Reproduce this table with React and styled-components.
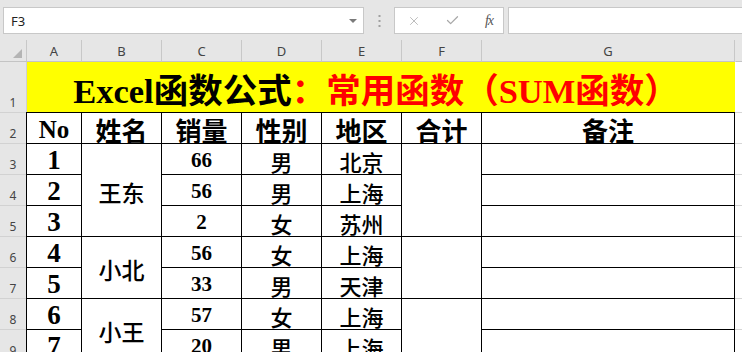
import styled, { createGlobalStyle } from 'styled-components';
import { X, Check } from 'lucide-react';

const GlobalStyle = createGlobalStyle`
  html, body {
    margin: 0;
    padding: 0;
    background: #ffffff;
    overflow: hidden;
  }
  body {
    width: 742px;
    height: 352px;
    font-family: "Noto Sans", "Open Sans", sans-serif;
  }
`;

const rows = [
  { no: 1, name: '王东', span: 3, qty: 66, sex: '男', area: '北京' },
  { no: 2, qty: 56, sex: '男', area: '上海' },
  { no: 3, qty: 2, sex: '女', area: '苏州' },
  { no: 4, name: '小北', span: 2, qty: 56, sex: '女', area: '上海' },
  { no: 5, qty: 33, sex: '男', area: '天津' },
  { no: 6, name: '小王', span: 2, qty: 57, sex: '女', area: '上海' },
  { no: 7, qty: 20, sex: '男', area: '上海' },
];

const letters = ['A', 'B', 'C', 'D', 'E', 'F', 'G'];

// 엑셀 상단 수식 입력줄
const FormulaBar = styled.div`
  height: 40px;
  box-sizing: border-box;
  background: #e6e6e6;
  display: flex;
  align-items: flex-start;
  padding: 7px 0 0 3px;
`;

const Box = styled.div`
  height: 27px;
  box-sizing: border-box;
  background: #ffffff;
  border: 1px solid #c8c8c8;
  display: flex;
  align-items: center;
`;

const NameBox = styled(Box)`
  width: 361px;
  padding: 0 6px 0 7px;
  justify-content: space-between;
  font-size: 13px;
  color: #222;
`;

const Caret = styled.span`
  width: 0;
  height: 0;
  border-left: 4px solid transparent;
  border-right: 4px solid transparent;
  border-top: 4px solid #7a7a7a;
`;

const Grip = styled.div`
  width: 30px;
  height: 27px;
  display: flex;
  align-items: center;
  justify-content: center;
`;

const ButtonBox = styled(Box)`
  width: 110px;
  padding: 0 10px 0 12px;
  justify-content: space-between;
  color: #a8a8a8;
`;

const Fx = styled.span`
  font-family: "Liberation Serif", serif;
  font-style: italic;
  font-size: 14px;
  color: #555;
  letter-spacing: -1px;
`;

const FormulaInput = styled(Box)`
  margin-left: 4px;
  flex: 1;
  border-right: none;
`;

// 시트 격자
const Sheet = styled.div`
  display: grid;
  grid-template-columns: 26px 55px 80px 80px 80px 80px 80px 254px 1fr;
  grid-template-rows: 22px 50px repeat(8, 31px);
`;

const Corner = styled.div`
  background: #e6e6e6;
  border-bottom: 1px solid #c4c4c4;
  display: flex;
  align-items: flex-end;
  justify-content: flex-end;
  padding: 0 4px 3px 0;
`;

const ColHead = styled.div`
  box-sizing: border-box;
  background: #e6e6e6;
  border-bottom: 1px solid #c4c4c4;
  border-left: 1px solid ${({ $edge }) => ($edge ? '#e6e6e6' : '#c8c8c8')};
  border-right: ${({ $last }) => ($last ? '1px solid #c8c8c8' : 'none')};
  display: flex;
  align-items: flex-end;
  justify-content: center;
  padding-bottom: 1px;
  font-size: 13px;
  color: #444;
`;

const RowHead = styled.div`
  box-sizing: border-box;
  background: #e6e6e6;
  border-top: ${({ $first }) => ($first ? 'none' : '1px solid #d2d2d2')};
  display: flex;
  align-items: flex-end;
  justify-content: center;
  padding-bottom: 1px;
  font-size: 12px;
  color: #444;
`;

const Title = styled.div`
  grid-column: span 7;
  box-sizing: border-box;
  background: #ffff00;
  border-left: 1px solid #d0d0d0;
  display: flex;
  align-items: center;
  justify-content: center;
  padding: 2px 10px 0 0;
  font-family: "Liberation Serif", "Noto Sans CJK SC", serif;
  font-weight: 700;
  font-size: 34.5px;
  color: #000;
  white-space: nowrap;
`;

const Red = styled.span`
  color: #ff0000;
`;

const Cell = styled.div`
  box-sizing: border-box;
  grid-row: ${({ $span }) => ($span ? `span ${$span}` : 'auto')};
  border-left: 1px solid #000;
  border-top: 1px solid #000;
  border-right: ${({ $last }) => ($last ? '1px solid #000' : 'none')};
  display: flex;
  align-items: center;
  justify-content: center;
  padding-top: 3px;
  font-family: "Liberation Serif", "Noto Sans CJK SC", serif;
  font-size: ${({ $size }) => $size || 22}px;
  font-weight: ${({ $bold }) => ($bold ? 700 : 500)};
  color: #000;
  white-space: nowrap;
`;

const Blank = styled.div`
  border-top: ${({ $top }) => ($top ? 'none' : '1px solid #d6d6d6')};
  background: #fff;
`;

function App() {
  return (
    <>
      <GlobalStyle />
      <FormulaBar>
        <NameBox>
          F3
          <Caret />
        </NameBox>
        <Grip>
          <svg width="3" height="12" viewBox="0 0 3 12">
            <rect x="0.5" y="0" width="2" height="2" fill="#a0a0a0" />
            <rect x="0.5" y="5" width="2" height="2" fill="#a0a0a0" />
            <rect x="0.5" y="10" width="2" height="2" fill="#a0a0a0" />
          </svg>
        </Grip>
        <ButtonBox>
          <X size={14} strokeWidth={1.3} />
          <Check size={15} strokeWidth={2} />
          <Fx>fx</Fx>
        </ButtonBox>
        <FormulaInput />
      </FormulaBar>

      <Sheet>
        <Corner>
          <svg width="9" height="9" viewBox="0 0 9 9">
            <polygon points="9,0 9,9 0,9" fill="#b4b4b4" />
          </svg>
        </Corner>
        {letters.map((l, i) => (
          <ColHead key={l} $last={i === letters.length - 1}>
            {l}
          </ColHead>
        ))}
        <ColHead $edge />

        <RowHead $first>1</RowHead>
        <Title>
          Excel函数公式<Red>：常用函数（SUM函数）</Red>
        </Title>
        <Blank $top />

        <RowHead>2</RowHead>
        <Cell $bold $size={25}>No</Cell>
        <Cell $bold $size={26}>姓名</Cell>
        <Cell $bold $size={26}>销量</Cell>
        <Cell $bold $size={26}>性别</Cell>
        <Cell $bold $size={26}>地区</Cell>
        <Cell $bold $size={26}>合计</Cell>
        <Cell $bold $size={26} $last>备注</Cell>
        <Blank />

        {rows.map((r, i) => (
          <Row key={r.no} r={r} index={i + 3} />
        ))}
      </Sheet>
    </>
  );
}

//한 줄(행) 그리기, 병합된 칸은 첫 행에서만 그림
function Row({ r, index }) {
  return (
    <>
      <RowHead>{index}</RowHead>
      <Cell $bold $size={27}>{r.no}</Cell>
      {r.name && (
        <Cell $span={r.span} $size={23}>
          {r.name}
        </Cell>
      )}
      <Cell $bold $size={21}>{r.qty}</Cell>
      <Cell>{r.sex}</Cell>
      <Cell>{r.area}</Cell>
      {r.name && <Cell $span={r.span} />}
      <Cell $last />
      <Blank />
    </>
  );
}

export default App;
